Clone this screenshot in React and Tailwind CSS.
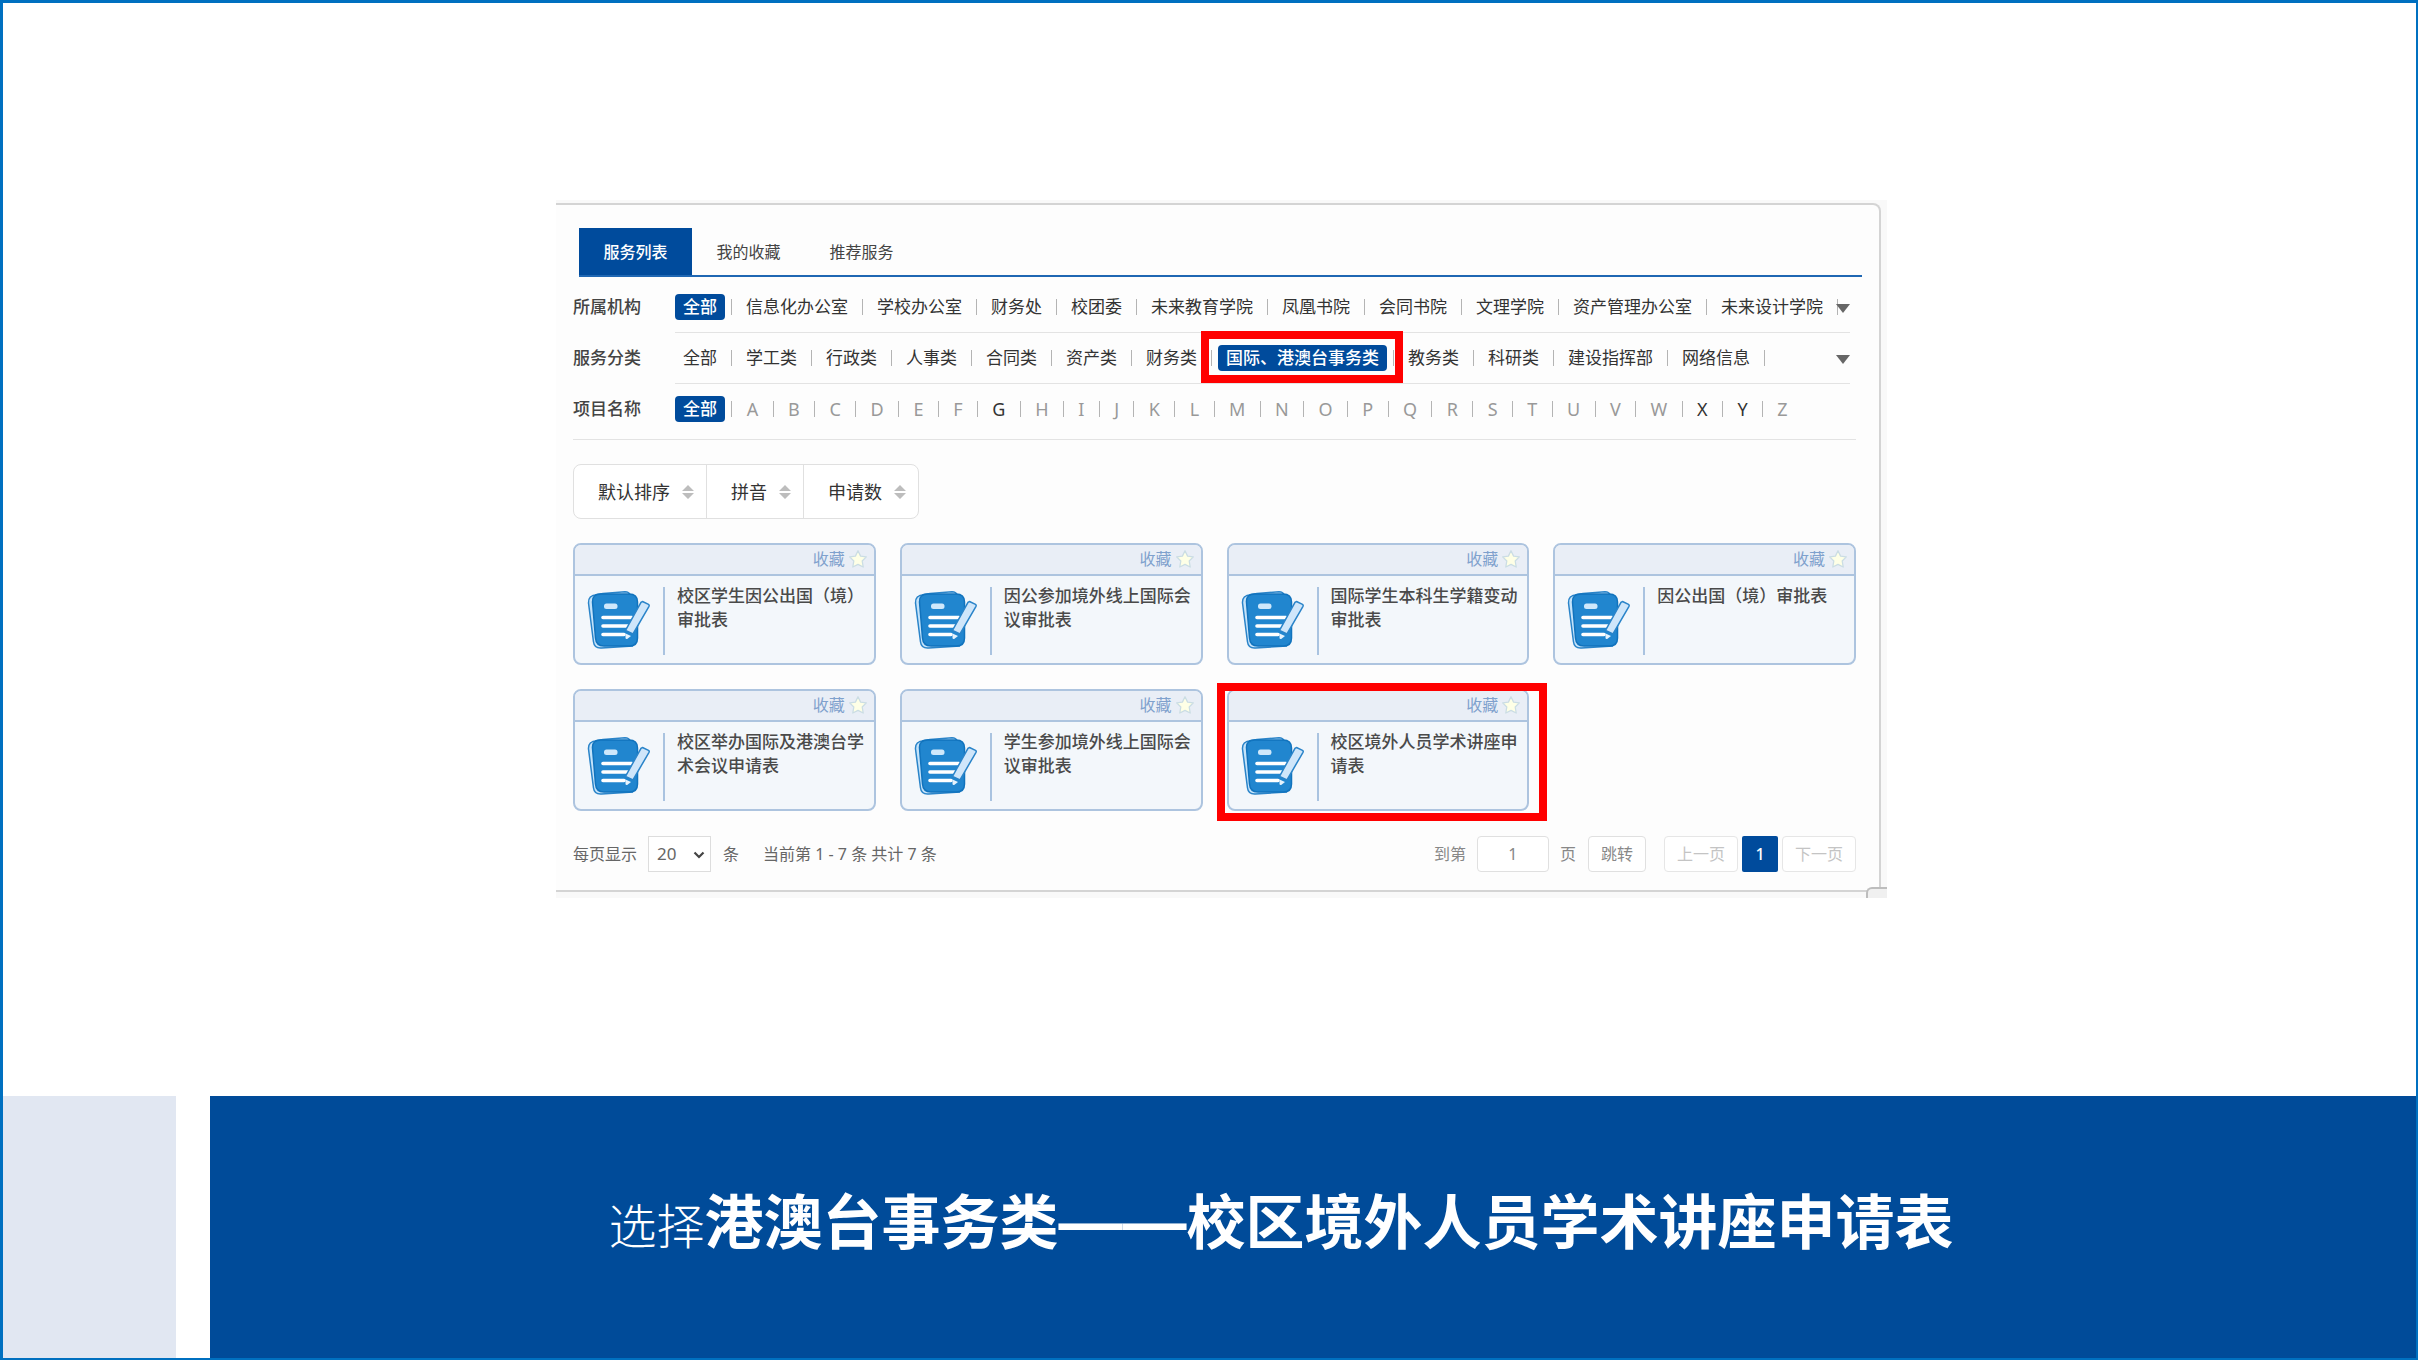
import React, { useState } from 'react';
import clsx from 'clsx';

const TABS = ['服务列表', '我的收藏', '推荐服务'];

const ORGS = [
  '全部', '信息化办公室', '学校办公室', '财务处', '校团委', '未来教育学院',
  '凤凰书院', '会同书院', '文理学院', '资产管理办公室', '未来设计学院',
];

const CATEGORIES = [
  '全部', '学工类', '行政类', '人事类', '合同类', '资产类', '财务类',
  '国际、港澳台事务类', '教务类', '科研类', '建设指挥部', '网络信息',
];

const LETTERS = 'ABCDEFGHIJKLMNOPQRSTUVWXYZ'.split('');
const USED_LETTERS = ['G', 'X', 'Y'];

const SERVICES = [
  '校区学生因公出国（境）审批表',
  '因公参加境外线上国际会议审批表',
  '国际学生本科生学籍变动审批表',
  '因公出国（境）审批表',
  '校区举办国际及港澳台学术会议申请表',
  '学生参加境外线上国际会议审批表',
  '校区境外人员学术讲座申请表',
];

function Separator() {
  return <span className="w-px h-4 mx-[6px] bg-[#b4b4b4] shrink-0" />;
}

function Chip({ active, className, children, onClick }) {
  return (
    <button
      type="button"
      onClick={onClick}
      className={clsx(
        'h-[26px] px-2 rounded leading-[26px] whitespace-nowrap cursor-pointer',
        active ? 'bg-[#004b9c] text-white font-medium' : 'text-[#333]',
        className
      )}
    >
      {children}
    </button>
  );
}

function MoreButton() {
  return (
    <button type="button" aria-label="展开" className="absolute right-0 top-[22px] cursor-pointer">
      <svg width="14" height="9" viewBox="0 0 14 9" fill="#666">
        <path d="M0 0h14L7 9z" />
      </svg>
    </button>
  );
}

// One filter line: label on the left, options on the right
function FilterRow({ label, children }) {
  return (
    <div className="flex">
      <div className="w-[102px] shrink-0 pt-3 leading-[26px] text-[#444] font-medium">{label}</div>
      <div className="relative flex flex-1 items-center py-3 mr-[6px] border-b border-[#e3e3e3]">
        {children}
      </div>
    </div>
  );
}

function SortButton({ children }) {
  return (
    <button
      type="button"
      className="flex items-center gap-3 h-[53px] pl-6 pr-3 text-lg text-[#333] border-r border-[#e0e0e0] last:border-r-0 cursor-pointer"
    >
      {children}
      <svg width="12" height="14" viewBox="0 0 12 14" fill="#bdbdbd">
        <path d="M6 0l6 6H0zM6 14l6-6H0z" />
      </svg>
    </button>
  );
}

function FormIcon() {
  return (
    <svg width="64" height="60" viewBox="0 0 64 60" className="shrink-0" fill="none">
      <path d="M8 4q3-1 8-1.500L38 .8q4 0 5 3" stroke="#2a84c9" strokeWidth="1.500" fill="#d5eafb" />
      <path d="M10 3.800Q1 4 1.500 12l5 39q.8 6.500 8 6L46 55" fill="#c4e3fa" stroke="#2a84c9" strokeWidth="1.500" />
      <path
        d="M14 3h28q8.500 0 8.500 8v36q0 8-8 8H17q-8 0-8.500-8L5.500 11Q5 3 14 3z"
        fill="#2186cf"
        stroke="#1173bd"
        strokeWidth="1.500"
      />
      <rect x="17" y="12.500" width="13.500" height="5.500" rx="2.500" fill="#cfe8fb" />
      <path d="M16 26.500h29M16 35h25M16 43.500h21" stroke="#fff" strokeWidth="3.600" strokeLinecap="round" />
      <path d="M55.500 10.500l6 2.800q1.200.7.500 2L46 43l-7.500-3.600L54 11.300z" fill="#cfe6fa" stroke="#2a84c9" strokeWidth="1.500" />
      <path d="M38.500 42.500l5.500 2.600-3.800 2.800q-1.500.4-1.700-1z" fill="#e6f3fd" />
    </svg>
  );
}

function Star() {
  return (
    <svg width="18" height="18" viewBox="0 0 18 18" className="shrink-0">
      <path
        d="M9 .8l2.600 5.300 5.700.8-4.100 4.100 1 6L9 14.300 3.800 17l1-6L.7 6.900l5.700-.8z"
        fill="#feffe6"
        stroke="#cbdde4"
        strokeWidth="1.300"
        strokeLinejoin="round"
      />
    </svg>
  );
}

function ServiceCard({ title, marked }) {
  return (
    <article className="relative h-[122px] border-2 border-[#adc4df] rounded-lg bg-[#f3f7fb]">
      <header className="flex items-center justify-end h-[31px] pr-[7px] pb-px rounded-t-md bg-[#e9eef6] border-b-2 border-[#adc4df]">
        <button type="button" className="flex items-center gap-1 text-base leading-6 text-[#7fa1cd] cursor-pointer">
          收藏
          <Star />
        </button>
      </header>
      <div className="flex pt-2 pl-3">
        <div className="flex items-start pt-1 pr-3 mt-[3px] h-[68px] border-r-2 border-[#a9c3e0]">
          <FormIcon />
        </div>
        <h3 className="flex-1 pl-3 pr-2 text-[17px] leading-6 font-medium text-[#4a4a4a]">{title}</h3>
      </div>
      {marked && (
        <div className="absolute -left-3 -right-5 -top-2 -bottom-3 border-8 border-[#ff0000] pointer-events-none" />
      )}
    </article>
  );
}

function Pager() {
  const [size, setSize] = useState('20');
  const [page, setPage] = useState('1');

  return (
    <div className="flex items-center mt-[25px] text-base text-[#666]">
      <label htmlFor="page-size" className="mr-[11px]">每页显示</label>
      <div className="relative">
        <select
          id="page-size"
          value={size}
          onChange={(e) => setSize(e.target.value)}
          className="appearance-none w-[63px] h-9 pl-2 text-[17px] bg-white border border-[#ddd] text-[#666]"
        >
          <option>20</option>
          <option>50</option>
        </select>
        <svg width="12" height="8" viewBox="0 0 12 8" className="absolute right-[6px] top-[15px] pointer-events-none" fill="none">
          <path d="M1.500 1.500L6 6l4.500-4.500" stroke="#444" strokeWidth="2.200" />
        </svg>
      </div>
      <span className="ml-3">条</span>
      <span className="ml-6">当前第 1 - 7 条 共计 7 条</span>

      <div className="flex items-center ml-auto text-[#888]">
        <label htmlFor="page-jump">到第</label>
        <input
          id="page-jump"
          value={page}
          onChange={(e) => setPage(e.target.value)}
          className="w-[72px] h-9 mx-[11px] text-center bg-white border border-[#e0e0e0] rounded"
        />
        <span>页</span>
        <button type="button" className="h-9 px-3 ml-3 bg-white border border-[#e0e0e0] rounded cursor-pointer">跳转</button>
        <button type="button" className="h-9 px-3 ml-[18px] bg-white border border-[#e6e6e6] rounded text-[#c4c4c4]">上一页</button>
        <button type="button" className="w-9 h-9 mx-1 bg-[#004b9c] rounded-xs text-white font-medium">1</button>
        <button type="button" className="h-9 px-3 bg-white border border-[#e6e6e6] rounded text-[#c4c4c4]">下一页</button>
      </div>
    </div>
  );
}

export default function App() {
  const [tab, setTab] = useState('服务列表');
  const [org, setOrg] = useState('全部');
  const [category, setCategory] = useState('国际、港澳台事务类');
  const [letter, setLetter] = useState('全部');

  return (
    <div className="flex flex-col min-h-screen border-[3px] border-b-2 border-r-2 border-[#0070c0] bg-white font-['Noto_Sans','Noto_Sans_CJK_SC',sans-serif]">
      <main className="grid flex-1 grid-cols-[553fr_1331fr_529fr] items-start pt-[197px]">
        <section className="relative col-start-2 pt-[3px] pr-[6px] pb-[6px] bg-[#f9f9f9] text-[17px]">
          <div className="pl-[17px] pr-[17px] pt-[23px] pb-[18px] bg-[#fdfdfd] border-t-2 border-r-2 border-b-2 border-[#d4d4d4] rounded-tr-lg">
            {/* Tabs */}
            <nav className="flex ml-[6px] border-b-2 border-[#1f67b3]">
              {TABS.map((name) => (
                <button
                  key={name}
                  type="button"
                  onClick={() => setTab(name)}
                  className={clsx(
                    'w-[113px] h-[47px] text-base cursor-pointer',
                    tab === name ? 'bg-[#004b9c] text-white font-medium' : 'text-[#444]'
                  )}
                >
                  {name}
                </button>
              ))}
            </nav>

            <div className="mr-[6px] pt-[5px]">
              {/* Filters */}
              <FilterRow label="所属机构">
                {ORGS.map((name) => (
                  <React.Fragment key={name}>
                    <Chip active={org === name} onClick={() => setOrg(name)}>{name}</Chip>
                    <Separator />
                  </React.Fragment>
                ))}
                <MoreButton />
              </FilterRow>
              <FilterRow label="服务分类">
                {CATEGORIES.map((name) => (
                  <React.Fragment key={name}>
                    <div className="relative">
                      <Chip active={category === name} onClick={() => setCategory(name)}>{name}</Chip>
                      {category === name && (
                        <div className="absolute -left-[17px] -right-4 -top-[14px] -bottom-3 border-8 border-[#ff0000] pointer-events-none" />
                      )}
                    </div>
                    <Separator />
                  </React.Fragment>
                ))}
                <MoreButton />
              </FilterRow>
              <div className="flex pt-3 pb-[17px] border-b border-[#e3e3e3]">
                <div className="w-[102px] shrink-0 leading-[26px] text-[#444] font-medium">项目名称</div>
                <div className="flex flex-1 items-center justify-between mr-[60px]">
                  <Chip active={letter === '全部'} onClick={() => setLetter('全部')}>全部</Chip>
                  {LETTERS.map((name) => (
                    <React.Fragment key={name}>
                      <span className="w-px h-4 bg-[#b4b4b4]" />
                      <button
                        type="button"
                        onClick={() => setLetter(name)}
                        className={clsx(
                          'h-[26px] px-2 text-lg leading-[26px] cursor-pointer',
                          USED_LETTERS.includes(name) ? 'text-[#333]' : 'text-[#999]'
                        )}
                      >
                        {name}
                      </button>
                    </React.Fragment>
                  ))}
                </div>
              </div>

              {/* Sorting */}
              <div className="inline-flex mt-6 border border-[#e0e0e0] rounded-lg bg-white align-top">
                <SortButton>默认排序</SortButton>
                <SortButton>拼音</SortButton>
                <SortButton>申请数</SortButton>
              </div>

              {/* Services */}
              <div className="grid grid-cols-4 gap-6 mt-6">
                {SERVICES.map((title) => (
                  <ServiceCard key={title} title={title} marked={title === '校区境外人员学术讲座申请表'} />
                ))}
              </div>

              <Pager />
            </div>
          </div>
          <div className="absolute right-0 bottom-0 w-[21px] h-[11px] bg-[#f0f0f0] border-t-2 border-l-2 border-[#bdbdbd] rounded-tl-md" />
        </section>
      </main>

      <footer className="flex h-[262px]">
        <div className="w-[173px] shrink-0 bg-[#e1e7f2]" />
        <div className="flex flex-1 items-center justify-center ml-[34px] pr-16 pb-3 bg-[#004b99] text-white whitespace-nowrap font-['Noto_Sans_CJK_SC',sans-serif]">
          <p className="text-[48px] leading-none font-light">
            选择
            <strong className="text-[59px] font-bold">
              港澳台事务类
              <span className="text-[64px] font-['Liberation_Sans',sans-serif]">——</span>
              校区境外人员学术讲座申请表
            </strong>
          </p>
        </div>
      </footer>
    </div>
  );
}
